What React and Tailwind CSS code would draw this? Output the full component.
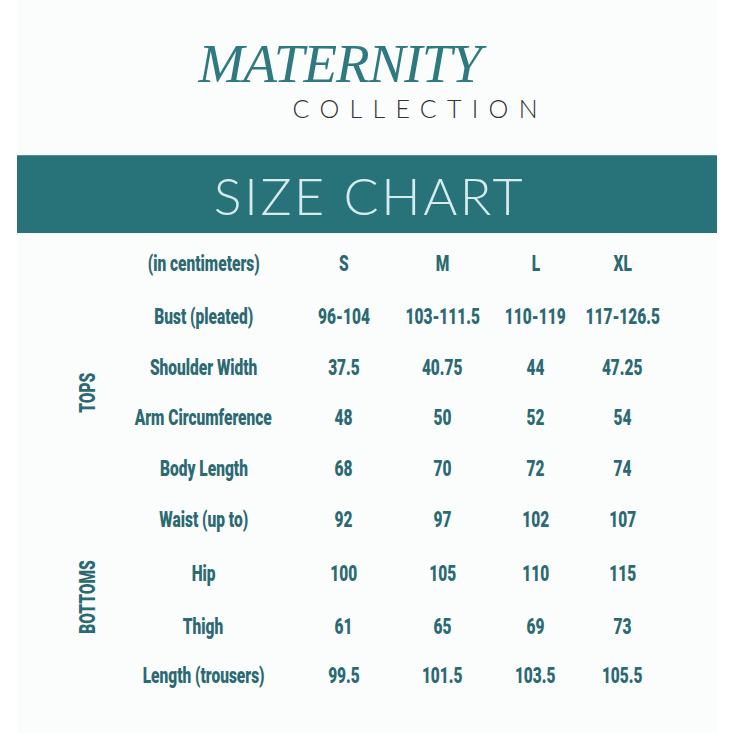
import React from "react";

const cond = {
  fontFamily: 'Roboto, "Liberation Sans", sans-serif',
};

const rows = [
  { h: "h-[52px]", label: "Bust (pleated)", v: ["96-104", "103-111.5", "110-119", "117-126.5"] },
  { h: "h-[50px]", label: "Shoulder Width", v: ["37.5", "40.75", "44", "47.25"] },
  { h: "h-[51px]", label: "Arm Circumference", v: ["48", "50", "52", "54"] },
  { h: "h-[50px]", label: "Body Length", v: ["68", "70", "72", "74"] },
];
const rows2 = [
  { h: "h-[53px]", label: "Waist (up to)", v: ["92", "97", "102", "107"] },
  { h: "h-[54px]", label: "Hip", v: ["100", "105", "110", "115"] },
  { h: "h-[52px]", label: "Thigh", v: ["61", "65", "69", "73"] },
  { h: "h-[46px]", label: "Length (trousers)", v: ["99.5", "101.5", "103.5", "105.5"] },
];

function T({ children }) {
  return <span className="inline-block scale-x-[0.72] whitespace-nowrap">{children}</span>;
}

function Cells({ label, v }) {
  return (
    <>
      <div className="w-[86px] flex justify-center whitespace-nowrap"><T>{label}</T></div>
      <div className="w-[80px] ml-[57px] flex justify-center whitespace-nowrap"><T>{v[0]}</T></div>
      <div className="w-[80px] ml-[19px] flex justify-center whitespace-nowrap"><T>{v[1]}</T></div>
      <div className="w-[80px] ml-[13px] flex justify-center whitespace-nowrap"><T>{v[2]}</T></div>
      <div className="w-[80px] ml-[7px] flex justify-center whitespace-nowrap"><T>{v[3]}</T></div>
    </>
  );
}

function Group({ name, data }) {
  return (
    <div className="flex">
      <div className="w-[144px] flex items-center justify-center">
        <div className="[writing-mode:vertical-rl] rotate-180 scale-y-[0.72]">{name}</div>
      </div>
      <div className="flex flex-col">
        {data.map((r) => (
          <div key={r.label} className={`${r.h} flex items-center`}>
            <Cells label={r.label} v={r.v} />
          </div>
        ))}
      </div>
    </div>
  );
}

export default function App() {
  return (
    <div className="w-[733px] h-[733px] bg-white flex justify-center">
      <div className="w-[700px] h-full bg-[#fbfcfc] flex flex-col">
        <div className="h-[155px] flex flex-col pt-[34px]">
          <div
            className="pl-[182px] text-[55px] leading-[60px] italic text-[#2f7a80] tracking-[-1px]"
            style={{ fontFamily: '"Liberation Serif", serif' }}
          >
            MATERNITY
          </div>
          <div
            className="pl-[276px] text-[25px] leading-[28px] font-light text-[#333] tracking-[10.3px]"
            style={{ fontFamily: 'Lato, "Open Sans", sans-serif' }}
          >
            COLLECTION
          </div>
        </div>
        <div className="h-[78px] bg-[#28727a] border-t border-[#5e8f93] flex items-center justify-center">
          <div
            className="text-[52px] font-light text-[#d6ebeb] tracking-[2.6px] leading-none pl-[6px]"
            style={{ fontFamily: 'Lato, "Open Sans", sans-serif' }}
          >
            SIZE CHART
          </div>
        </div>
        <div
          className="flex flex-col pt-[5px] text-[21.5px] font-black text-[#2b6a72]"
          style={cond}
        >
          <div className="flex h-[53px] items-center">
            <div className="w-[144px]" />
            <Cells label="(in centimeters)" v={["S", "M", "L", "XL"]} />
          </div>
          <Group name="TOPS" data={rows} />
          <Group name="BOTTOMS" data={rows2} />
        </div>
      </div>
    </div>
  );
}
